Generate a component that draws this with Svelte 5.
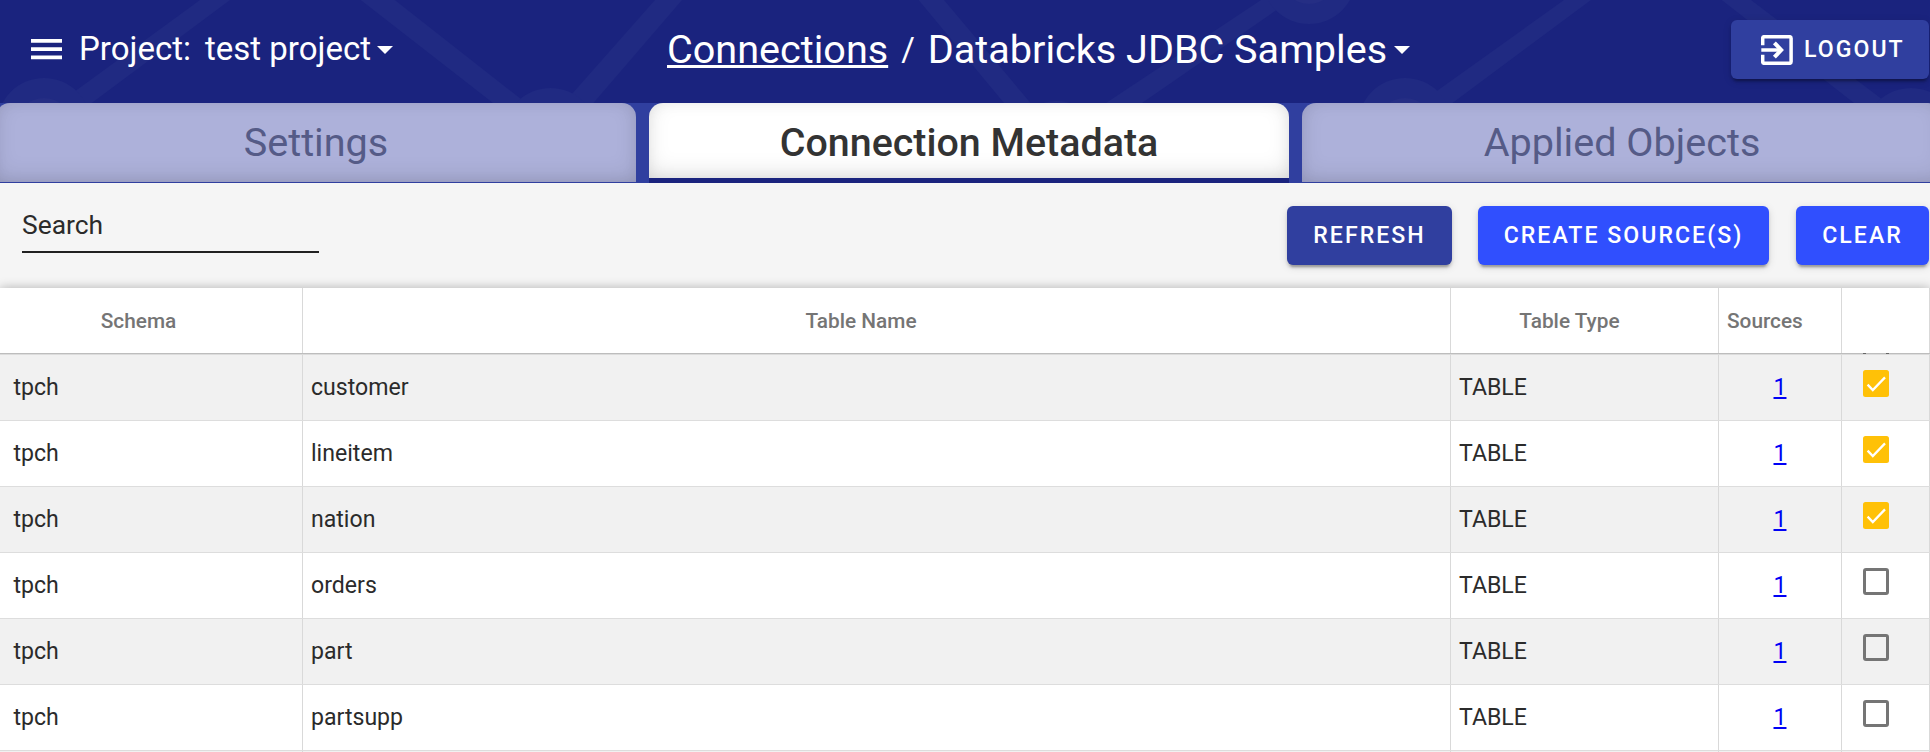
<script>
  const tabs = [
    { label: 'Settings', active: false },
    { label: 'Connection Metadata', active: true },
    { label: 'Applied Objects', active: false },
  ];
  const columns = ['Schema', 'Table Name', 'Table Type', 'Sources', ''];
  const rows = [
    { schema: 'tpch', name: 'customer', type: 'TABLE', sources: 1, checked: true },
    { schema: 'tpch', name: 'lineitem', type: 'TABLE', sources: 1, checked: true },
    { schema: 'tpch', name: 'nation', type: 'TABLE', sources: 1, checked: true },
    { schema: 'tpch', name: 'orders', type: 'TABLE', sources: 1, checked: false },
    { schema: 'tpch', name: 'part', type: 'TABLE', sources: 1, checked: false },
    { schema: 'tpch', name: 'partsupp', type: 'TABLE', sources: 1, checked: false },
  ];
</script>

<div class="app">
  <header class="topbar">
    <svg class="pattern" width="1930" height="103" viewBox="0 0 1930 103" aria-hidden="true">
      <g fill="#202a82">
        <polygon points="59,103 200,0 230,0 91.7,103" />
        <polygon points="360.7,0 394.8,0 526,103 493,103" />
        <polygon points="564,103 655,0 682,0 593.4,103" />
        <polygon points="918.6,0 944,0 1030.6,103 1004,103" />
        <polygon points="1106,103 1261,0 1291,0 1142,103" />
        <polygon points="1420,103 1564,0 1591,0 1452.5,103" />
        <polygon points="1721.7,0 1751,0 1887,103 1854,103" />
        <circle cx="44" cy="125" r="47" />
        <circle cx="550.5" cy="135" r="47" />
        <circle cx="1056.7" cy="148" r="47" />
        <circle cx="1309" cy="-23" r="47" />
        <circle cx="1405" cy="125" r="47" />
        <circle cx="1911" cy="135" r="47" />
      </g>
      <g fill="#252e84">
        <circle cx="44" cy="125" r="27" />
        <circle cx="1309" cy="-23" r="27" />
        <circle cx="1405" cy="125" r="27" />
      </g>
    </svg>

    <div class="project">
      <svg class="menu" width="31" height="21" viewBox="0 0 31 21" fill="#fff"><path d="M0 0h31v3.8H0zM0 8.2h31v3.8H0zM0 16.4h31v3.8H0z" /></svg>
      <span class="label">Project:</span>
      <span>test project</span>
      <svg class="caret" width="16" height="8" viewBox="0 0 16 8" fill="#fff"><path d="M0 0h16L8 8z" /></svg>
    </div>

    <nav class="crumbs">
      <a href="#connections">Connections</a>
      <span class="slash">/</span>
      <span>Databricks JDBC Samples</span>
      <svg class="caret" width="16" height="8" viewBox="0 0 16 8" fill="#fff"><path d="M0 0h16L8 8z" /></svg>
    </nav>

    <button class="btn logout">
      <svg width="32" height="30" viewBox="0 0 32 30" fill="none" stroke="#fff">
        <path d="M1.7 10.2V3.2Q1.7 1.7 3.2 1.7H28.6Q30.1 1.7 30.1 3.2V26.8Q30.1 28.3 28.6 28.3H3.2Q1.7 28.3 1.7 26.8V19.8" stroke-width="3.5" />
        <path d="M0.3 15H20.5" stroke-width="3.5" />
        <path d="M13.4 7.8L20.2 15L13.4 22.2" stroke-width="4" />
      </svg>
      LOGOUT
    </button>
  </header>

  <div class="tabs">
    {#each tabs as tab}
      <div class="tab" class:active={tab.active}>{tab.label}</div>
    {/each}
  </div>

  <section class="toolbar">
    <div class="search">Search</div>
    <div class="actions">
      <button class="btn refresh">REFRESH</button>
      <button class="btn create">CREATE SOURCE(S)</button>
      <button class="btn clear">CLEAR</button>
    </div>
  </section>

  <div class="table">
    <div class="row head">
      {#each columns as column}
        <div class="cell">{column}</div>
      {/each}
    </div>
    <div class="under"><i></i><i></i></div>
    {#each rows as row, i}
      <div class="row" class:odd={i % 2 === 0}>
        <div class="cell">{row.schema}</div>
        <div class="cell">{row.name}</div>
        <div class="cell">{row.type}</div>
        <div class="cell center"><a href="#sources">{row.sources}</a></div>
        <div class="cell check">
          {#if row.checked}
            <svg width="26" height="27" viewBox="0 0 26 27">
              <rect width="26" height="27" rx="2.5" fill="#ffc107" />
              <path d="M4.6 14.6L9.8 20L22 7.4" fill="none" stroke="#fff" stroke-width="2.3" />
            </svg>
          {:else}
            <span class="box"></span>
          {/if}
        </div>
      </div>
    {/each}
    <div class="row odd next"><div class="cell"></div><div class="cell"></div><div class="cell"></div><div class="cell"></div><div class="cell"></div></div>
  </div>
</div>

<style>
  :global(body) { overflow: hidden; }
  .app {
    width: 1930px;
    height: 752px;
    overflow: hidden;
    background: #f5f5f5;
    font-family: Roboto, sans-serif;
    color: #2b2b2b;
  }
  .topbar {
    position: relative;
    box-sizing: border-box;
    height: 103px;
    padding: 0 1px 4px 31px;
    background: #1a237e;
    color: #fff;
    display: grid;
    grid-template-columns: 636px 1064px 198px;
    align-items: center;
    white-space: nowrap;
  }
  .pattern { position: absolute; inset: 0; }
  .project, .crumbs { position: relative; display: flex; align-items: center; }
  .project { font-size: 33px; line-height: 40px; }
  .project span { margin-top: -1px; }
  .project svg, .crumbs svg { display: block; }
  .project .label { margin: -1px 14px 0 17px; }
  .project .caret { margin: 1px 0 0 6px; }
  .crumbs { font-size: 39.6px; line-height: 46px; }
  .crumbs a {
    color: #fff;
    text-decoration: underline;
    text-decoration-thickness: 3px;
    text-underline-offset: 2px;
    text-decoration-skip-ink: none;
  }
  .slash { font-size: 33px; margin: 0 13px 0 13px; }
  .crumbs .caret { margin: 1px 0 0 7px; }
  .btn {
    box-sizing: border-box;
    height: 59px;
    border: 0;
    padding: 0;
    border-radius: 6px;
    background: #303f9f;
    color: #fff;
    font: 500 23.1px Roboto, sans-serif;
    letter-spacing: 2.03px;
    display: flex;
    align-items: center;
    justify-content: center;
    white-space: nowrap;
    box-shadow: 0 5px 2px -3px rgba(0,0,0,.2), 0 3px 3px 0 rgba(0,0,0,.14), 0 2px 8px 0 rgba(0,0,0,.12);
  }
  .logout { position: relative; justify-content: flex-start; gap: 11px; padding-left: 30px; }
  .tabs {
    box-sizing: border-box;
    height: 80px;
    padding-bottom: 1px;
    background: #303f9f;
    display: flex;
    gap: 13px;
  }
  .tab {
    box-sizing: border-box;
    flex: 0 0 640px;
    height: 79px;
    border-radius: 14px 14px 0 0;
    background: #adb1da;
    color: #555b87;
    font-size: 39.6px;
    line-height: 79px;
    text-align: center;
    box-shadow: inset 0 -6px 26px -6px rgba(0,0,0,.17), inset 0 0 14px rgba(0,0,0,.05);
  }
  .tab:first-child { margin-left: -4px; }
  .tab.active {
    background: #fff;
    height: 80px;
    border-bottom: 5px solid #1a237e;
    color: #333;
    font-size: 39.4px;
    font-weight: 500;
  }
  .toolbar {
    box-sizing: border-box;
    height: 105px;
    padding: 23px 1px 0 22px;
    display: flex;
    justify-content: space-between;
  }
  .search {
    box-sizing: border-box;
    width: 297px;
    height: 47px;
    border-bottom: 2px solid #212121;
    font-size: 26.4px;
    line-height: 38px;
    letter-spacing: 0;
  }
  .actions { display: flex; }
  .refresh { width: 165px; margin-right: 26px; }
  .create { width: 291px; margin-right: 27px; background: #304ffe; }
  .clear { width: 133px; background: #304ffe; }
  .table {
    width: 1930px;
    background: #fff;
    box-shadow: 0 0 10px rgba(0,0,0,.28);
  }
  .row {
    box-sizing: border-box;
    display: grid;
    grid-template-columns: 303px 1148px 268px 123px 88px;
    height: 66px;
    border-bottom: 1px solid #ddd;
    background: #fff;
    font-size: 23.1px;
    line-height: 65px;
  }
  .odd { background: #f1f1f1; }
  .cell { border-right: 1px solid #d9d9d9; padding-left: 8px; }
  .cell:first-child { padding-left: 13.5px; }
  .head { height: 65px; border: 0; font-size: 20.8px; line-height: 67px; font-weight: 500; color: #757575; }
  .head .cell { box-sizing: border-box; text-align: center; padding: 0 31px 0 0; height: 65px; }
  .head .cell:first-child { padding: 0 25px 0 0; }
  .head .cell:nth-child(3) { padding: 0 30px 0 0; }
  .head .cell:nth-child(4) { text-align: left; padding: 0 0 0 8px; }
  .under {
    box-sizing: border-box;
    height: 2px;
    padding-left: 1863px;
    background: #dcdcdc;
    border-top: 1px solid #bdbdbd;
    display: flex;
    gap: 20px;
  }
  .under i { width: 3px; height: 1px; margin-top: -1px; background: #666; }
  .cell.center { text-align: center; padding: 0; }
  .center a {
    color: #0000f5;
    text-decoration: underline;
    text-decoration-thickness: 2px;
    text-underline-offset: 2px;
  }
  .cell.check { padding: 15px 0 0 21px; line-height: 0; }
  .check svg { display: block; }
  .box {
    display: block;
    box-sizing: border-box;
    width: 26px;
    height: 27px;
    border: 3px solid #757575;
    border-radius: 3px;
  }
  .next { height: 1px; border: 0; }
</style>
